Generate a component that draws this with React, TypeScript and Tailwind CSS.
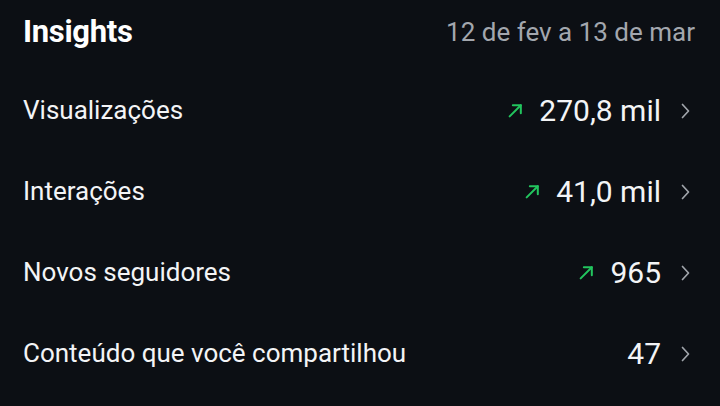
import React from 'react';

type Row = { label: string; value: string; up: boolean };

const rows: Row[] = [
  { label: 'Visualizações', value: '270,8 mil', up: true },
  { label: 'Interações', value: '41,0 mil', up: true },
  { label: 'Novos seguidores', value: '965', up: true },
  { label: 'Conteúdo que você compartilhou', value: '47', up: false },
];

function UpArrow() {
  return (
    <svg width="17" height="17" viewBox="0 0 16 16" fill="none" stroke="#22c55e" strokeWidth="1.9" strokeLinecap="round" strokeLinejoin="round">
      <path d="M2.5 13.5 L13 3" />
      <path d="M5.5 3 H13 V10.5" />
    </svg>
  );
}

function Chevron() {
  return (
    <svg width="10" height="16" viewBox="0 0 10 16" fill="none" stroke="#a1a5ab" strokeWidth="1.7" strokeLinecap="round" strokeLinejoin="round">
      <path d="M2.5 1.5 L8.5 8 L2.5 14.5" />
    </svg>
  );
}

export default function App() {
  return (
    <div className="w-[720px] h-[406px] bg-[#0c0f14] text-white overflow-hidden" style={{ fontFamily: 'Roboto, "Noto Sans", sans-serif' }}>
      <div className="flex items-center justify-between pl-[23px] pr-[25px] h-[64px]">
        <h2 className="text-[31px] font-bold tracking-[-0.3px]">Insights</h2>
        <span className="text-[26px] text-[#a3a7ae]">12 de fev a 13 de mar</span>
      </div>
      <div className="flex flex-col">
        {rows.map(r => (
          <div key={r.label} className="flex items-center justify-between pl-[23px] pr-[30px] h-[81px] first:mt-[6px]">
            <span className="text-[26px] text-[#f3f4f6]">{r.label}</span>
            <div className="flex items-center">
              {r.up && <span className="mr-[15px] flex"><UpArrow /></span>}
              <span className="text-[30px] text-[#f3f4f6]">{r.value}</span>
              <span className="ml-[19px] flex"><Chevron /></span>
            </div>
          </div>
        ))}
      </div>
    </div>
  );
}
